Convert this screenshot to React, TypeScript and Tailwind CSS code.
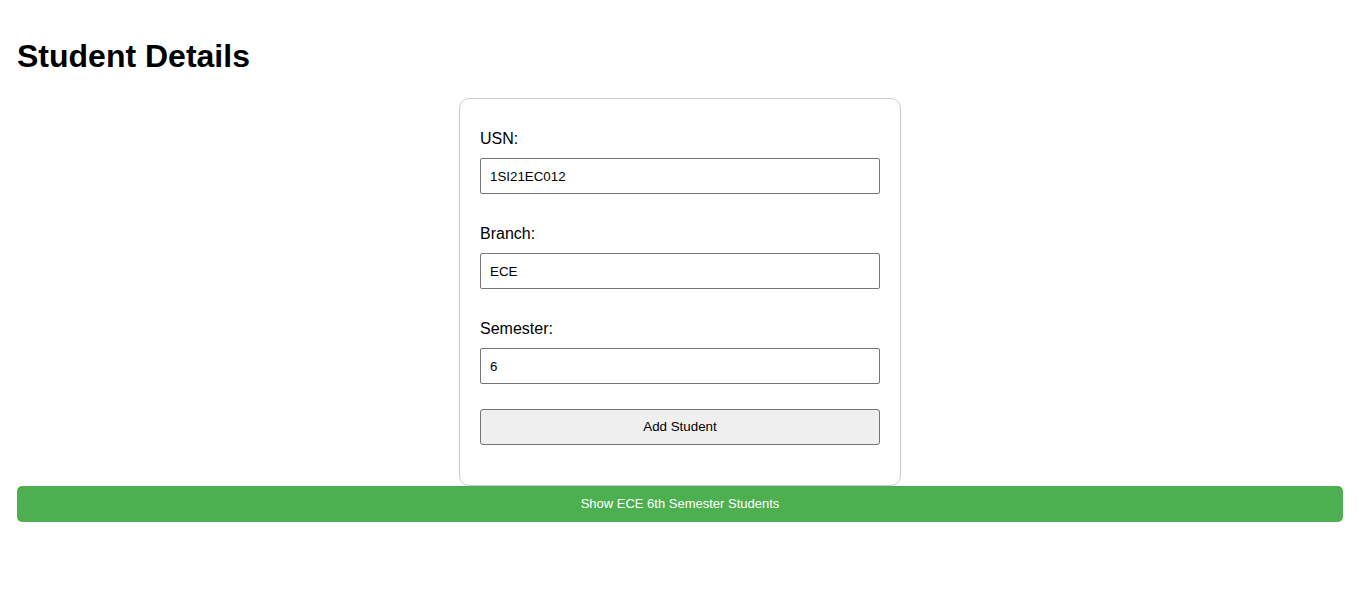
import { useState } from 'react';

const font = { fontFamily: '"Liberation Sans", Arial, sans-serif' };

function Field({
    label,
    value,
    onChange,
    last,
}: {
    label: string;
    value: string;
    onChange: (v: string) => void;
    last?: boolean;
}) {
    return (
        <div className={last ? 'mb-[25px]' : 'mb-[30px]'}>
            <label className="block text-[16px] leading-[19px] text-black mb-[10px]">{label}</label>
            <input
                value={value}
                onChange={(e) => onChange(e.target.value)}
                className="block w-full h-[36px] px-[9px] border border-[#767676] rounded-[2px] text-[13.33px] text-black bg-white outline-none"
            />
        </div>
    );
}

export default function App() {
    const [usn, setUsn] = useState('1SI21EC012');
    const [branch, setBranch] = useState('ECE');
    const [sem, setSem] = useState('6');

    return (
        <div className="min-h-screen bg-white pl-[17px] pr-[16px] pt-[38px]" style={font}>
            <h1 className="text-[32px] leading-[37px] font-bold text-black">Student Details</h1>

            <div className="mx-auto mt-[23px] w-[442px] border border-[#cccccc] rounded-[10px] px-[20px] pt-[30px] pb-[40px]">
                <Field label="USN:" value={usn} onChange={setUsn} />
                <Field label="Branch:" value={branch} onChange={setBranch} />
                <Field label="Semester:" value={sem} onChange={setSem} last />
                <button className="block w-full h-[36px] border border-[#767676] rounded-[3px] bg-[#efefef] text-[13.33px] text-black">
                    Add Student
                </button>
            </div>

            <button className="block w-full h-[36px] rounded-[5px] bg-[#4caf50] text-[13px] text-white">
                Show ECE 6th Semester Students
            </button>
        </div>
    );
}
